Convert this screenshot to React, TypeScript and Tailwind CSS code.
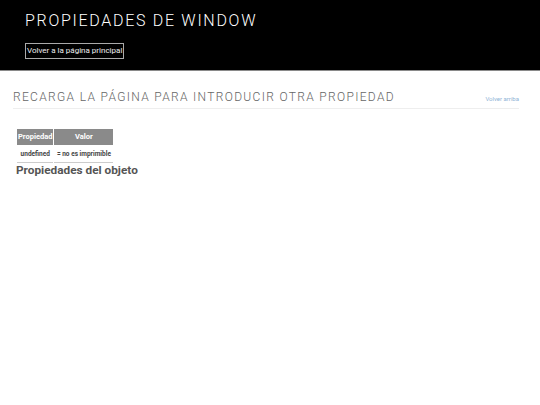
export default function App() {
  return (
    <div className="min-h-[405px] bg-white font-['Roboto',sans-serif]">
      {/* Header */}
      <div className="h-[71px] border-b border-[#8a8a8a] bg-black px-[25px] pt-[10px]">
        <h1 className="text-[16px] font-light leading-[21px] tracking-[1.7px] text-white">
          PROPIEDADES DE WINDOW
        </h1>
        <button className="mt-[12px] border border-[#aaaaaa] px-[1px] py-[1px] text-[8px] leading-[12px] text-[#eeeeee]">
          Volver a la página principal
        </button>
      </div>

      {/* Section title */}
      <div className="ml-[13px] mr-[21px] mt-[19px] flex items-end justify-between border-b border-[#eeeeee] pb-[4px]">
        <h2 className="text-[12px] font-light leading-[14px] tracking-[1.33px] text-[#666666]">
          RECARGA LA PÁGINA PARA INTRODUCIR OTRA PROPIEDAD
        </h2>
        <a className="mb-[1px] text-[6px] leading-[8px] text-[#8fb3d6]">Volver arriba</a>
      </div>

      {/* Table */}
      <div className="ml-[16px] mt-[19px]">
        <table className="border-separate border-spacing-[1px] text-[7.5px] font-bold">
          <thead>
            <tr>
              <th className="h-[16px] bg-[#8a8a8a] px-[1px] text-white">Propiedad</th>
              <th className="h-[16px] w-[59px] bg-[#8a8a8a] text-white">Valor</th>
            </tr>
          </thead>
          <tbody>
            <tr>
              <td className="h-[17px] border-b border-[#cccccc] pt-[1px] text-center text-[6.5px] text-[#444444]">
                undefined
              </td>
              <td className="h-[17px] border-b border-[#cccccc] pt-[1px] text-center text-[6.5px] text-[#444444]">
                = no es imprimible
              </td>
            </tr>
          </tbody>
        </table>
        <h3 className="-mt-[1px] text-[11.8px] font-bold leading-[14px] text-[#555555]">
          Propiedades del objeto
        </h3>
      </div>
    </div>
  );
}
